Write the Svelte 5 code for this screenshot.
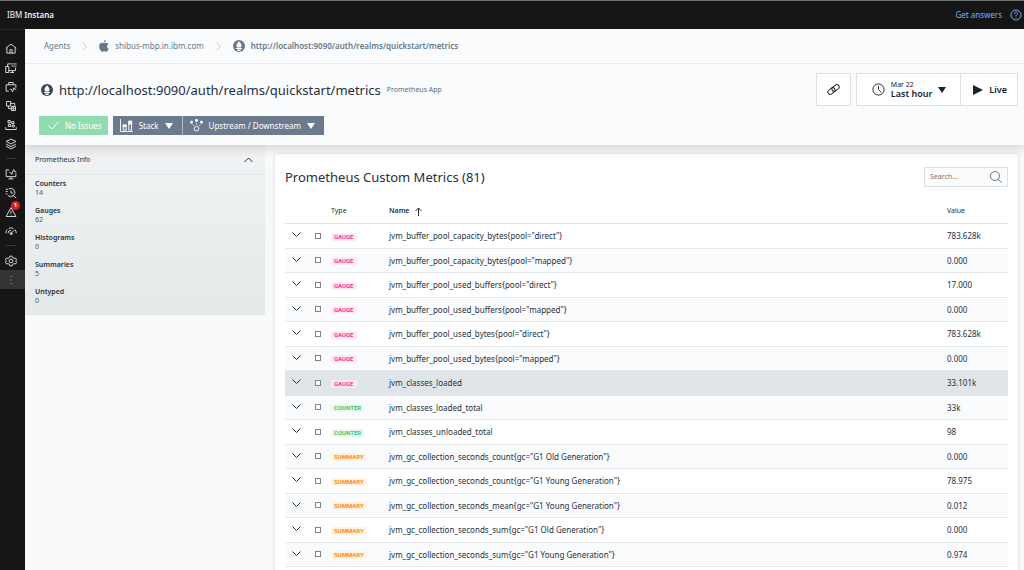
<script lang="ts">
  let query = $state('');

  const info = [
    ['Counters', 14],
    ['Gauges', 62],
    ['Histograms', 0],
    ['Summaries', 5],
    ['Untyped', 0]
  ];

  const metrics = [
    { type: 'gauge', name: 'jvm_buffer_pool_capacity_bytes{pool="direct"}', value: '783.628k' },
    { type: 'gauge', name: 'jvm_buffer_pool_capacity_bytes{pool="mapped"}', value: '0.000' },
    { type: 'gauge', name: 'jvm_buffer_pool_used_buffers{pool="direct"}', value: '17.000' },
    { type: 'gauge', name: 'jvm_buffer_pool_used_buffers{pool="mapped"}', value: '0.000' },
    { type: 'gauge', name: 'jvm_buffer_pool_used_bytes{pool="direct"}', value: '783.628k' },
    { type: 'gauge', name: 'jvm_buffer_pool_used_bytes{pool="mapped"}', value: '0.000' },
    { type: 'gauge', name: 'jvm_classes_loaded', value: '33.101k', active: true },
    { type: 'counter', name: 'jvm_classes_loaded_total', value: '33k' },
    { type: 'counter', name: 'jvm_classes_unloaded_total', value: '98' },
    { type: 'summary', name: 'jvm_gc_collection_seconds_count{gc="G1 Old Generation"}', value: '0.000' },
    { type: 'summary', name: 'jvm_gc_collection_seconds_count{gc="G1 Young Generation"}', value: '78.975' },
    { type: 'summary', name: 'jvm_gc_collection_seconds_mean{gc="G1 Young Generation"}', value: '0.012' },
    { type: 'summary', name: 'jvm_gc_collection_seconds_sum{gc="G1 Old Generation"}', value: '0.000' },
    { type: 'summary', name: 'jvm_gc_collection_seconds_sum{gc="G1 Young Generation"}', value: '0.974' }
  ];

  const shown = $derived(metrics.filter((m) => m.name.includes(query)));

  // Stroke icons on a 32-unit grid; null marks a divider.
  const nav = [
    { label: 'Home', d: 'M2 14 16 3l14 11M5 12v15h22V12M13 27v-9h6v9' },
    { label: 'Websites', d: 'M7 12V5h9M2 12h8v16H2zM10 23h18v-8M20 23v5M14 28h10M19 3v4M24 3v4M29 3v4M19 9v4M24 9v4M29 9v4' },
    { label: 'Applications', d: 'M10 27H3V10h26v8M10 10V4h12v6M13 22h4l3 7 4-11 2 4h4' },
    { label: 'Platforms', d: 'M4 4h11v12H4zM15 9h11v6M9 16v7h7M17 17h11v11H17zM17 22h11M22 17v11' },
    { label: 'Kubernetes', d: 'M8 4h6v6H8zM18 7h6v5h-6zM9 14h6v6H9zM19 16h6v5h-6zM2 22v6h28v-6' },
    { label: 'Infrastructure', d: 'm16 3 13 6-13 7L3 9zM3 16l13 7 13-7M3 22l13 7 13-7' },
    null,
    { label: 'Synthetic', d: 'M11 5H3v18h26v-9M16 23v6M9 29h14M12 12h3l3 5 5-13 3 6h4' },
    { label: 'Analytics', d: 'M22 22l8 8M10 5a11 11 0 1 1-3 17M2 6h6M2 12h5M2 18h4M16 9v7h5' },
    { label: 'Events', d: 'M16 4 3 28h26zM16 13v7M16 23v2', badge: 1 },
    { label: 'Service levels', d: 'M2 22a14 14 0 0 1 4-10M10 9a14 14 0 0 1 12 0M26 12a14 14 0 0 1 4 10M8 22a8 8 0 0 1 8-8M16 22l8-8M14 21h5v4h-5z' },
    null,
    { label: 'Settings', d: 'M13 3h6l1 4 4 2 4-1 3 5-3 3 3 3-3 5-4-1-4 2-1 4h-6l-1-4-4-2-4 1-3-5 3-3-3-3 3-5 4 1 4-2zM16 11a5 5 0 1 0 0 10 5 5 0 0 0 0-10z' },
    { label: 'More', d: 'M15 6h2M15 16h2M15 26h2', active: true }
  ];
</script>

{#snippet emblem()}
  <svg class="emblem" viewBox="0 0 24 24" aria-hidden="true">
    <circle cx="12" cy="12" r="12" fill="currentColor" />
    <path fill="#fafbfd" d="M12 2c1 3 5 4 5 9 0 2-1 3-1 4H8c0-1-1-2-1-4 0-5 4-6 5-9zM6 16h12v2H6zM8 19h8c0 2-2 3-4 3s-4-1-4-3z" />
  </svg>
{/snippet}

{#snippet caret()}
  <svg class="caret" viewBox="0 0 8 6" aria-hidden="true"><path d="M0 0h8L4 6z" fill="currentColor" /></svg>
{/snippet}

{#snippet separator()}
  <svg class="separator" viewBox="0 0 5 9" aria-hidden="true"><path d="m.5.5 4 4-4 4" /></svg>
{/snippet}

<div class="app">
  <header class="topbar">
    <div class="brand">IBM <b>Instana</b></div>
    <a href="#answers" class="answers">
      Get answers
      <svg viewBox="0 0 12 12" aria-hidden="true">
        <circle cx="6" cy="6" r="5" />
        <path d="M4.400 4.800c0-2.400 3.200-2.200 3.200-.3C7.600 5.700 6 5.600 6 7.200M6 8.300v.9" />
      </svg>
    </a>
  </header>

  <div class="body">
    <nav class="rail">
      {#each nav as item}
        {#if item}
          <a href="#nav" class:active={item.active} aria-label={item.label}>
            <svg viewBox="0 0 32 32" aria-hidden="true"><path d={item.d} /></svg>
            {#if item.badge}<span class="count">{item.badge}</span>{/if}
          </a>
        {:else}
          <hr />
        {/if}
      {/each}
    </nav>

    <div class="page">
      <div class="head">
        <div class="crumbs">
          <a href="#agents">Agents</a>
          {@render separator()}
          <a href="#host">
            <svg class="apple" viewBox="0 0 22 26" aria-hidden="true">
              <path fill="currentColor" d="M15 0c.2 3-2 5.500-4.600 5.500C10.200 2.800 12.500.3 15 0zM18 13.500c0-2.800 1.500-4.200 2.800-5C19.500 6.700 17.500 6 15.800 6c-2 0-3.200 1-4.600 1S8.300 6 6.600 6C3.500 6 .3 8.600.3 13.600c0 5.600 3.900 12 7 12 1.500 0 2.200-1 4.100-1s2.500 1 4.100 1c2.600 0 4.900-4 5.900-6.500-2-.8-3.400-2.600-3.400-5.600z" />
            </svg>
            shibus-mbp.in.ibm.com
          </a>
          {@render separator()}
          <a href="#app" class="current">{@render emblem()}http://localhost:9090/auth/realms/quickstart/metrics</a>
        </div>

        <div class="title-row">
          <div class="title">
            {@render emblem()}
            <h1>http://localhost:9090/auth/realms/quickstart/metrics</h1>
            <span>Prometheus App</span>
          </div>
          <div class="tools">
            <button class="tool link" aria-label="Copy link">
              <svg viewBox="0 0 16 16" aria-hidden="true">
                <g transform="rotate(-38 8 8)">
                  <rect x="1" y="5.500" width="8.500" height="5" rx="2.500" />
                  <rect x="6.500" y="5.500" width="8.500" height="5" rx="2.500" />
                </g>
              </svg>
            </button>
            <div class="group">
              <button class="tool time">
                <svg class="clock" viewBox="0 0 14 14" aria-hidden="true"><circle cx="7" cy="7" r="6" /><path d="M7 3v4l3 3" /></svg>
                <span><small>Mar 22</small><b>Last hour</b></span>
                {@render caret()}
              </button>
              <button class="tool live">
                <svg viewBox="0 0 10 10" aria-hidden="true"><path d="M0 0v10l10-5z" fill="currentColor" /></svg>
                <b>Live</b>
              </button>
            </div>
          </div>
        </div>

        <div class="actions">
          <button class="ok">
            <svg viewBox="0 0 11 9" aria-hidden="true"><path d="m.5 4.500 3.500 3.500 6.500-7" /></svg>
            No Issues
          </button>
          <div class="group">
            <button class="slate">
              <svg class="glyph" viewBox="0 0 14 14" aria-hidden="true">
                <path d="M.5 0v13.500H14" />
                <path d="M3.500 12V6.500h3V12zM9.500 12V2.500h3V12z" />
                <path d="M3 6h4v2.500H3zM9 2h4v4H9z" fill="currentColor" stroke="none" />
              </svg>
              Stack
              {@render caret()}
            </button>
            <button class="slate">
              <svg class="glyph" viewBox="0 0 14 14" aria-hidden="true">
                <circle cx="7" cy="10.500" r="2.500" />
                <g fill="currentColor" stroke="none">
                  <circle cx="1.600" cy="3.500" r="1.500" /><circle cx="7" cy="1.700" r="1.600" /><circle cx="12.400" cy="3.500" r="1.500" />
                </g>
                <path d="m3 6 1.300 1.300M7 4.500V6M11 6 9.700 7.300" />
              </svg>
              Upstream / Downstream
              {@render caret()}
            </button>
          </div>
        </div>
      </div>

      <div class="content">
        <aside>
          <button class="panel-head">
            Prometheus Info
            <svg viewBox="0 0 9 6" aria-hidden="true"><path d="m.5 5 4-4 4 4" /></svg>
          </button>
          <dl>
            {#each info as [term, n]}
              <div><dt>{term}</dt><dd>{n}</dd></div>
            {/each}
          </dl>
        </aside>

        <main>
          <div class="card-head">
            <h2>Prometheus Custom Metrics (81)</h2>
            <label class="search">
              <input type="text" placeholder="Search..." aria-label="Search" bind:value={query} />
              <svg viewBox="0 0 12 12" aria-hidden="true"><circle cx="5" cy="5" r="4.500" /><path d="m8.300 8.300 3.400 3.400" /></svg>
            </label>
          </div>

          <table>
            <thead>
              <tr>
                <th class="c-open"></th>
                <th class="c-tick"></th>
                <th class="c-type">Type</th>
                <th class="c-name" aria-sort="ascending">
                  Name
                  <svg viewBox="0 0 7 9" aria-hidden="true"><path d="M3.500 9V1M.5 4l3-3 3 3" /></svg>
                </th>
                <th class="c-value">Value</th>
              </tr>
            </thead>
            <tbody>
              {#each shown as m}
                <tr class:active={m.active}>
                  <td>
                    <button class="expand" aria-label="Expand">
                      <svg viewBox="0 0 9 6" aria-hidden="true"><path d="m.5.5 4 4 4-4" /></svg>
                    </button>
                  </td>
                  <td><input type="checkbox" aria-label={m.name} /></td>
                  <td><span class="tag {m.type}">{m.type}</span></td>
                  <td>{m.name}</td>
                  <td>{m.value}</td>
                </tr>
              {/each}
            </tbody>
          </table>
        </main>
      </div>
    </div>
  </div>
</div>

<style>
  :global(body) {
    margin: 0;
    overflow: hidden;
    background: #f8f9fb;
  }
  .app {
    min-height: 100vh;
    display: flex;
    flex-direction: column;
    font-family: 'Noto Sans', 'Liberation Sans', sans-serif;
    font-size: 8px;
    line-height: 10px;
    color: #25303f;
  }
  .app * {
    box-sizing: border-box;
  }
  svg {
    display: block;
    flex: none;
    fill: none;
    stroke: currentColor;
  }
  .caret {
    width: 8px;
    height: 6px;
    stroke: none;
  }
  button {
    font: inherit;
    color: inherit;
    margin: 0;
    padding: 0;
    border: 0;
    background: none;
    cursor: pointer;
  }
  a {
    color: inherit;
    text-decoration: none;
  }
  b,
  dt,
  .c-name,
  .current {
    font-weight: 600;
  }

  .topbar {
    height: 29px;
    flex: none;
    padding: 0 2px 0 7px;
    display: flex;
    align-items: center;
    justify-content: space-between;
    background: #161616;
    color: #f4f4f4;
    border-top: 1px solid #6c716f;
  }
  .answers {
    display: flex;
    align-items: center;
    gap: 8px;
    color: #78a9ff;
  }
  .answers svg {
    width: 12px;
    height: 12px;
  }

  .body {
    flex: 1;
    display: flex;
  }
  .rail {
    width: 25px;
    flex: none;
    padding-top: 9px;
    background: #161616;
    color: #e8e8e8;
    border-top: 1px solid #292929;
  }
  .rail a {
    position: relative;
    height: 19px;
    padding-left: 5px;
    display: flex;
    align-items: center;
  }
  .rail a.active {
    background: #333;
  }
  .rail svg {
    width: 12px;
    height: 12px;
    stroke-width: 2.4;
  }
  .rail hr {
    width: 10px;
    margin: 5px 6px;
    border: 0;
    border-top: 1px solid #393939;
  }
  .count {
    position: absolute;
    top: -1px;
    left: 11px;
    width: 9px;
    height: 9px;
    border-radius: 50%;
    background: #da1e28;
    color: #fff;
    font-size: 6px;
    line-height: 9px;
    font-weight: 700;
    text-align: center;
  }

  .page {
    flex: 1;
    min-width: 0;
    display: flex;
    flex-direction: column;
  }
  .head {
    position: relative;
    background: #fafbfd;
    box-shadow: 0 2px 12px #00000030;
  }
  .crumbs {
    height: 35px;
    padding: 0 19px;
    display: flex;
    align-items: center;
    gap: 12px;
    border-bottom: 1px solid #e9ebee;
    color: #66788a;
  }
  .crumbs a {
    display: flex;
    align-items: center;
    gap: 6px;
  }
  .separator {
    width: 5px;
    height: 9px;
    color: #c6ccd2;
  }
  .apple {
    width: 10px;
    height: 12px;
    stroke: none;
  }
  .emblem {
    width: 12px;
    height: 12px;
    stroke: none;
    color: #66788a;
  }
  .title .emblem {
    color: #3a4656;
  }

  .title-row {
    padding: 9px 6px 0 16px;
    display: flex;
    align-items: center;
    justify-content: space-between;
  }
  .title {
    display: flex;
    align-items: center;
    gap: 6px;
  }
  h1,
  h2 {
    margin: 0;
    font-size: 13px;
    line-height: 18px;
    font-weight: 400;
  }
  .title span {
    font-size: 7px;
    color: #5f6b7a;
  }
  .tools,
  .actions {
    display: flex;
    gap: 5px;
  }
  .group {
    display: flex;
  }
  .tool {
    height: 33px;
    display: flex;
    align-items: center;
    justify-content: center;
    gap: 6px;
    border: 1px solid #dde1e4;
    background: #fff;
    color: #16242f;
  }
  .link {
    width: 35px;
  }
  .link svg {
    width: 15px;
    height: 15px;
  }
  .time {
    padding: 0 14px 0 15px;
  }
  .time span {
    display: flex;
    flex-direction: column;
    text-align: left;
    font-size: 9px;
  }
  .time small {
    font-size: 7px;
    line-height: 9px;
  }
  .clock {
    width: 13px;
    height: 13px;
  }
  .live {
    padding: 0 10px 0 12px;
    margin-left: -1px;
    font-size: 9px;
  }
  .live svg {
    width: 10px;
    height: 10px;
    stroke: none;
  }

  .actions {
    padding: 10px 14px;
    color: #fff;
  }
  .actions button {
    height: 19px;
    padding: 0 9px 0 7px;
    display: flex;
    align-items: center;
    gap: 6px;
  }
  .actions .ok {
    background: #8fdcae;
    border-radius: 1px;
    padding: 0 6px 0 9px;
  }
  .ok svg {
    width: 11px;
    height: 9px;
  }
  .slate {
    background: #6b7b8d;
  }
  .slate + .slate {
    border-left: 1px solid #b6bec7;
  }
  .glyph {
    width: 13px;
    height: 13px;
  }

  .content {
    flex: 1;
    display: flex;
    align-items: flex-start;
    gap: 10px;
    padding-right: 6px;
  }
  aside {
    width: 240px;
    flex: none;
    background: linear-gradient(#f1f3f4, #e4e9ea);
    font-size: 7px;
    line-height: 9px;
  }
  .panel-head {
    width: 100%;
    height: 30px;
    padding: 0 12px 0 10px;
    display: flex;
    align-items: center;
    justify-content: space-between;
    border-bottom: 1px solid #dfe4e6;
  }
  .panel-head svg {
    width: 9px;
    height: 6px;
  }
  dl {
    margin: 0;
    padding: 4px 10px 10px;
    display: grid;
    gap: 9px;
  }
  dd {
    margin: 0;
    color: #4c5866;
  }

  main {
    flex: 1;
    min-width: 0;
    margin-top: 9px;
    padding: 13px 10px;
    background: #fff;
    box-shadow: 0 0 3px #00000026;
  }
  .card-head {
    display: flex;
    align-items: center;
    justify-content: space-between;
  }
  .search {
    width: 84px;
    height: 20px;
    padding: 0 5px;
    display: flex;
    align-items: center;
    border: 1px solid #dde1e4;
    background: #fafbfd;
    color: #66788a;
  }
  .search input {
    flex: 1;
    min-width: 0;
    padding: 0;
    border: 0;
    outline: 0;
    background: none;
    font: inherit;
    font-size: 7px;
    color: inherit;
  }
  .search svg {
    width: 12px;
    height: 12px;
  }

  table {
    width: 100%;
    margin-top: 12px;
    border-collapse: separate;
    border-spacing: 0;
    table-layout: fixed;
  }
  th {
    height: 25px;
    padding: 0;
    text-align: left;
    font-size: 7px;
    font-weight: 400;
    border-bottom: 1px solid #dfe2e6;
  }
  .c-open {
    width: 24px;
  }
  .c-tick {
    width: 22px;
  }
  .c-type {
    width: 58px;
  }
  .c-value {
    width: 61px;
  }
  .c-name svg {
    display: inline-block;
    width: 7px;
    height: 9px;
    margin-left: 4px;
    vertical-align: middle;
  }
  td {
    height: 25px;
    padding: 0;
    border-bottom: 1px solid #e6e9ec;
    white-space: nowrap;
  }
  tbody tr:nth-child(even) td {
    height: 24px;
    background: #fafbfd;
  }
  tbody tr.active td {
    background: #e0e5e9;
  }
  .expand {
    display: block;
    padding: 0 7px 2px;
  }
  .expand svg {
    width: 9px;
    height: 6px;
  }
  input[type='checkbox'] {
    appearance: none;
    display: block;
    width: 6px;
    height: 6px;
    margin: 0 6px 1px;
    border: 1px solid #7c838b;
    background: #fff;
  }
  .tag {
    display: inline-block;
    padding: 0 3px;
    border-radius: 2px;
    font-family: Roboto, 'Liberation Sans', sans-serif;
    font-size: 6px;
    line-height: 8px;
    font-weight: 700;
    text-transform: uppercase;
    vertical-align: middle;
  }
  .gauge {
    color: #f5339b;
    background: #fdeaf4;
  }
  .counter {
    color: #3fc578;
    background: #eaf8f0;
  }
  .summary {
    color: #ff8a1f;
    background: #fff2e6;
  }
</style>
